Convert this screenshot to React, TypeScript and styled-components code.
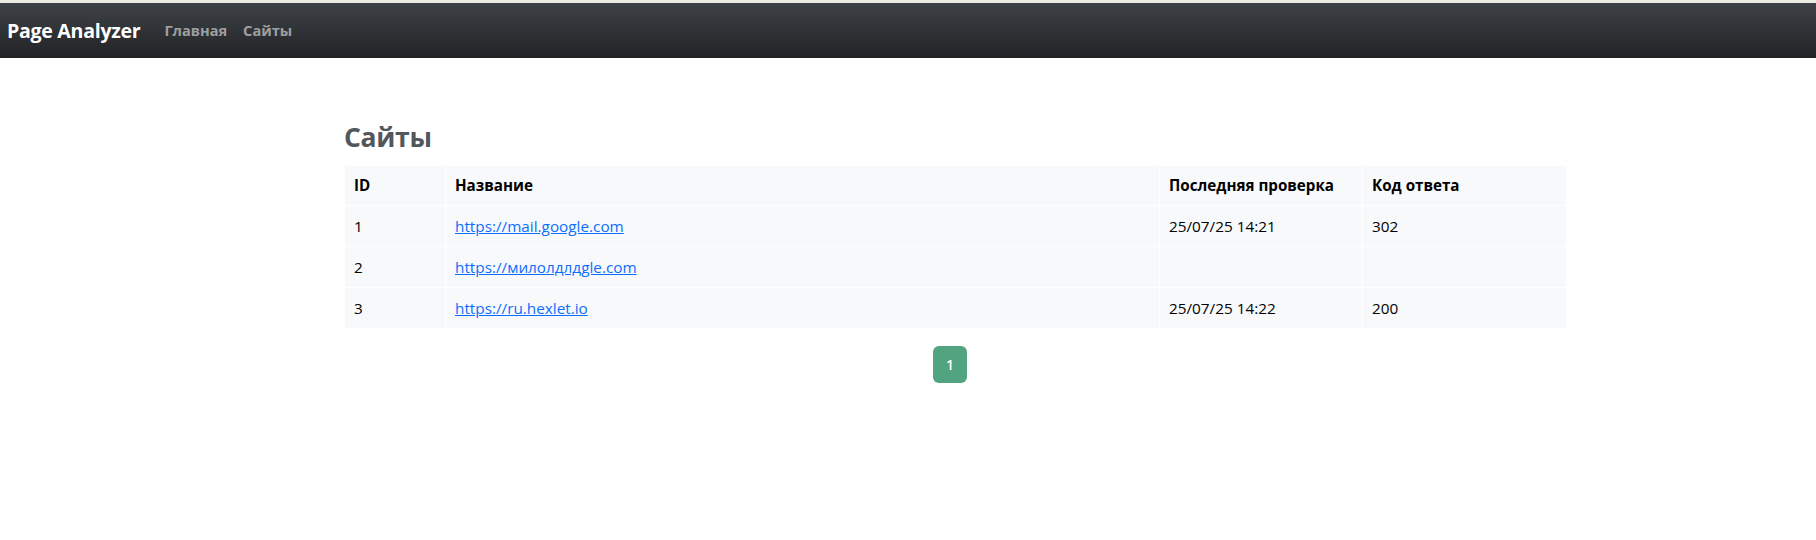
import React from "react";
import styled, { createGlobalStyle } from "styled-components";

interface ISite {
  id: number;
  name: string;
  lastCheck: string;
  status: string;
}

const sites: ISite[] = [
  { id: 1, name: "https://mail.google.com", lastCheck: "25/07/25 14:21", status: "302" },
  { id: 2, name: "https://милолдлдgle.com", lastCheck: "", status: "" },
  { id: 3, name: "https://ru.hexlet.io", lastCheck: "25/07/25 14:22", status: "200" },
];

const columns = [
  { title: "ID", width: 101 },
  { title: "Название", width: 714 },
  { title: "Последняя проверка", width: 203 },
  { title: "Код ответа", width: 204 },
];

function App() {
  return (
    <>
      <GlobalStyle />
      <TopStrip />
      <Navbar>
        <Brand href="#">Page Analyzer</Brand>
        <NavLink href="#">Главная</NavLink>
        <NavLink href="#">Сайты</NavLink>
      </Navbar>
      <Container>
        <Title>Сайты</Title>
        <Table>
          <colgroup>
            {columns.map((c) => (
              <col key={c.title} style={{ width: c.width }} />
            ))}
          </colgroup>
          <thead>
            <tr>
              {columns.map((c) => (
                <Th key={c.title}>{c.title}</Th>
              ))}
            </tr>
          </thead>
          <tbody>
            {sites.map((site) => (
              <tr key={site.id}>
                <Td>{site.id}</Td>
                <Td>
                  <SiteLink href="#">{site.name}</SiteLink>
                </Td>
                <Td>{site.lastCheck}</Td>
                <Td>{site.status}</Td>
              </tr>
            ))}
          </tbody>
        </Table>
        <Pagination>
          <PageButton $active>1</PageButton>
        </Pagination>
      </Container>
    </>
  );
}

const GlobalStyle = createGlobalStyle`
  body {
    margin: 0;
    background: #fff;
    font-family: "Open Sans", "Noto Sans", sans-serif;
    font-size: 16px;
    line-height: 1.5;
    color: #212529;
  }
`;

const TopStrip = styled.div`
  height: 3px;
  background: #eceee4;
`;

const Navbar = styled.nav`
  height: 55px;
  display: flex;
  align-items: center;
  padding: 0 7px;
  background: linear-gradient(180deg, #3e4145 0%, #212327 100%);
`;

const Brand = styled.a`
  color: #fff;
  font-size: 19.6px;
  font-weight: 700;
  text-decoration: none;
  margin-right: 24px;
  letter-spacing: -0.3px;
`;

const NavLink = styled.a`
  color: rgba(255, 255, 255, 0.55);
  font-size: 14.6px;
  font-weight: 700;
  text-decoration: none;
  margin-right: 16px;
`;

const Container = styled.main`
  width: 1222px;
  margin-left: 344px;
  padding-top: 64px;
`;

const Title = styled.h1`
  margin: 0 0 12px;
  font-size: 26.5px;
  line-height: 1.2;
  font-weight: 700;
  color: #53575c;
  letter-spacing: -0.3px;
`;

const Table = styled.table`
  width: 100%;
  table-layout: fixed;
  border-collapse: collapse;
  background: #f8f9fa;
  color: #000;
  font-size: 15.3px;
`;

const Th = styled.th`
  text-align: left;
  font-weight: 700;
  font-size: 15.2px;
  padding: 8px 8px 8px 9px;
  height: 40px;
  box-sizing: border-box;
  border: 1px solid #fff;
  border-top: 0;
`;

const Td = styled.td`
  padding: 8px 8px 8px 9px;
  height: 41px;
  box-sizing: border-box;
  border: 1px solid #fff;
`;

const SiteLink = styled.a`
  color: #0d6efd;
  text-decoration: underline;
`;

const Pagination = styled.div`
  display: flex;
  justify-content: center;
  margin-top: 17px;
  padding-right: 10px;
`;

const PageButton = styled.span<{ $active?: boolean }>`
  display: flex;
  align-items: center;
  justify-content: center;
  width: 34px;
  height: 37px;
  border-radius: 6px;
  font-size: 14px;
  font-weight: 600;
  color: #fff;
  background: ${(p) => (p.$active ? "#52a37f" : "#fff")};
`;

export default App;
